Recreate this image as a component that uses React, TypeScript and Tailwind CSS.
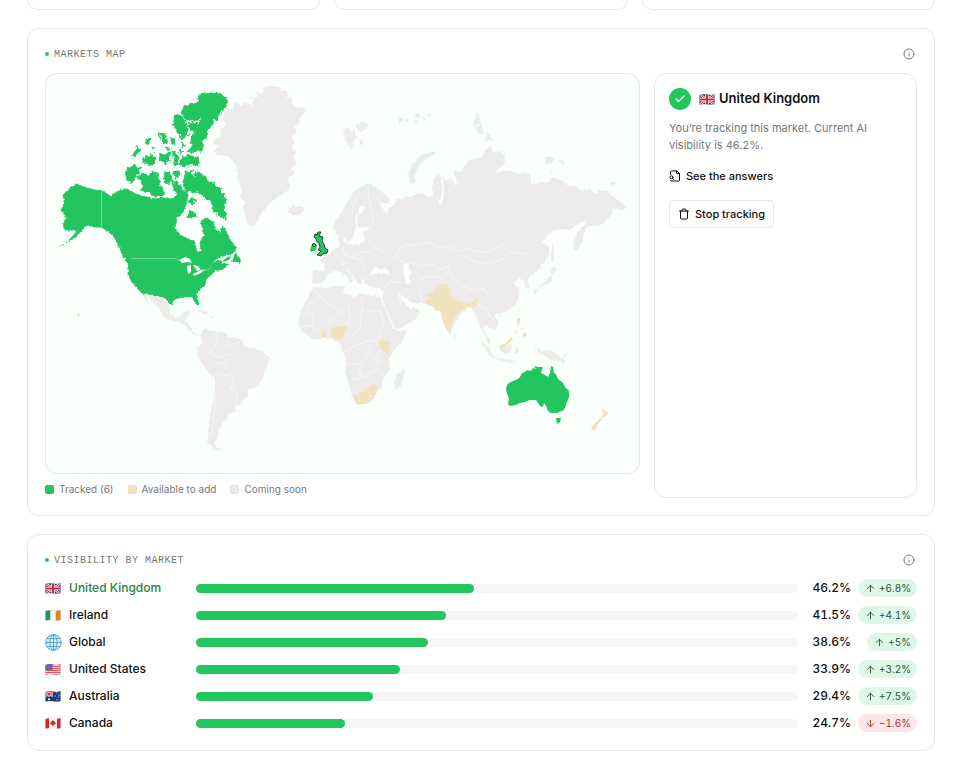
import type { ReactNode } from 'react'
import { ArrowDown, ArrowUp, Check, Info, Trash } from 'lucide-react'

type Code = 'gb' | 'ie' | 'global' | 'us' | 'au' | 'ca'

interface Market {
  code:  Code
  name:  string
  value: number
  delta: string
}

const MARKETS: Market[] = [
  { code: 'gb',     name: 'United Kingdom', value: 46.2, delta: '+6.8%' },
  { code: 'ie',     name: 'Ireland',        value: 41.5, delta: '+4.1%' },
  { code: 'global', name: 'Global',         value: 38.6, delta: '+5%' },
  { code: 'us',     name: 'United States',  value: 33.9, delta: '+3.2%' },
  { code: 'au',     name: 'Australia',      value: 29.4, delta: '+7.5%' },
  { code: 'ca',     name: 'Canada',         value: 24.7, delta: '−1.6%' },
]

const WAVE = 'M.5 2Q4 .8 8 1.6T15.5 1V11Q12 12 8 11.2T.5 11.6Z'

const unionJack = (
  <>
    <path fill="#2b3f86" d="M0 0h16v13H0z" />
    <path stroke="#fff" strokeWidth="2.2" d="M0 1l16 11M16 1L0 12" />
    <path stroke="#d0283c" strokeWidth="1" d="M0 1l16 11M16 1L0 12" />
    <path stroke="#fff" strokeWidth="3.4" d="M8 0v13M0 6.5h16" />
    <path stroke="#d0283c" strokeWidth="2" d="M8 0v13M0 6.5h16" />
  </>
)

const FLAGS: Record<Exclude<Code, 'global'>, ReactNode> = {
  gb: unionJack,
  ie: (
    <>
      <path fill="#fff" d="M0 0h16v13H0z" />
      <path fill="#1f9a5b" d="M0 0h5.3v13H0z" />
      <path fill="#e8821e" d="M10.7 0H16v13h-5.3z" />
    </>
  ),
  us: (
    <>
      <path fill="#f3c3c8" d="M0 0h16v13H0z" />
      <path stroke="#dd5a68" strokeWidth="1" d="M0 1.5h16M0 3.5h16M0 5.5h16M0 7.5h16M0 9.5h16M0 11.5h16" />
      <path fill="#3f66a8" d="M0 0h7.5v7H0z" />
      <path stroke="#a9bbdd" strokeWidth=".6" strokeDasharray=".7 .9" d="M1 3h6M1.6 4.4h5M1 5.8h6" />
    </>
  ),
  au: (
    <>
      <path fill="#1f3b80" d="M0 0h16v13H0z" />
      <path stroke="#fff" strokeWidth="1.6" d="M0 1.5l8 5M8 1.5l-8 5M4 1v6M0 4h8" />
      <path stroke="#d0283c" strokeWidth=".8" d="M0 1.5l8 5M8 1.5l-8 5M4 1v6M0 4h8" />
      <circle cx="4" cy="9.3" r="1" fill="#fff" />
      <path stroke="#fff" strokeWidth="1.1" strokeLinecap="round" d="M12 3h0M10.3 6h0M14 5.2h0M12 9.6h0M13.2 7h0" />
    </>
  ),
  ca: (
    <>
      <path fill="#fff" d="M0 0h16v13H0z" />
      <path fill="#e5202b" d="M0 0h4v13H0zM12 0h4v13h-4zM8 2.8l.8 1.4.9-.4-.2 1.6 1.4-.2-.5 1.1.5.5-1.9 1.5H8.3V10h-.6V8.3H7L5.1 6.8l.5-.5-.5-1.1 1.4.2-.2-1.6.9.4z" />
    </>
  ),
}

function Flag({ code }: { code: Code }) {
  if (code === 'global') {
    return (
      <svg viewBox="0 0 17 17" className="size-[17px] shrink-0" fill="none" aria-hidden="true">
        <circle cx="8.5" cy="8.5" r="7.8" fill="#d9eefa" stroke="#4e9fcb" />
        <ellipse cx="8.5" cy="8.5" rx="3.6" ry="7.8" stroke="#4e9fcb" strokeWidth=".9" />
        <path stroke="#4e9fcb" strokeWidth=".9" d="M8.5.7v15.6M.7 8.5h15.6M2.2 4.6h12.6M2.2 12.4h12.6" />
      </svg>
    )
  }
  return (
    <svg viewBox="0 0 16 13" className="h-[13px] w-4 shrink-0" fill="none" aria-hidden="true">
      <clipPath id="flag-wave"><path d={WAVE} /></clipPath>
      <g clipPath="url(#flag-wave)">{FLAGS[code]}</g>
      <path d={WAVE} stroke="#000" strokeOpacity=".15" strokeWidth=".5" />
    </svg>
  )
}

function AnswersIcon() {
  return (
    <svg
      viewBox="0 0 24 24"
      className="size-3"
      fill="none"
      stroke="currentColor"
      strokeWidth="2"
      strokeLinecap="round"
      strokeLinejoin="round"
      aria-hidden="true"
    >
      <path d="M15 2v4a1 1 0 0 0 1 1h5M3 9V4a2 2 0 0 1 2-2h11l5 5v13a2 2 0 0 1-2 2H4a2 2 0 0 1-1-1" />
      <circle cx="5" cy="14.500" r="3" />
      <path d="M9 19l-1.800-2" />
    </svg>
  )
}

// Land outlines
const EURASIA =
  'M313 270L319 270 325 271 324 264 320 260 324 257 328 256 333 250 340 245 338 239 339 234 342 232 343 236 344 242 352 245 362 243 365 237 363 231 372 228 366 227 359 228 357 222 358 216 362 212 366 208 362 205 359 208 358 213 355 218 356 226 355 231 352 240 347 242 343 234 337 234 334 229 334 222 338 217 342 212 346 204 350 198 353 192 358 188 364 186 368 183 373 186 378 189 384 193 390 199 389 204 383 203 378 201 382 206 384 211 387 213 389 208 393 206 398 197 401 200 405 197 411 197 417 193 423 193 428 197 433 196 432 187 434 179 438 174 441 178 442 188 441 198 438 204 442 204 444 194 443 178 448 181 451 176 455 186 457 182 454 172 462 171 464 166 470 160 482 157 486 150 490 146 494 152 500 151 505 155 505 163 498 170 495 174 502 170 510 171 520 174 525 172 530 175 531 184 536 184 542 181 548 183 552 177 563 181 568 186 577 186 582 191 590 189 597 194 597 190 607 191 615 198 622 203 627 207 622 211 616 209 612 208 613 213 608 218 604 223 597 226 587 227 584 232 583 240 577 251 574 249 573 242 577 233 587 221 584 221 577 225 570 230 560 229 553 231 547 236 542 243 546 244 549 247 549 254 544 263 538 270 532 275 527 279 529 284 528 289 525 287 524 281 520 278 517 280 513 283 518 287 519 294 518 301 513 307 507 311 502 313 497 314 494 315 498 320 498 326 494 330 490 328 485 325 484 329 488 338 485 337 480 327 478 318 474 314 470 305 465 310 461 314 455 323 450 334 445 327 442 318 441 312 435 305 424 303 413 303 407 299 402 296 397 291 400 297 405 303 410 309 414 307 420 311 417 318 407 325 396 329 392 321 385 308 382 297 385 289 378 288 370 287 364 283 364 277 372 275 381 273 390 275 388 270 383 267 380 270 377 267 372 270 368 277 362 279 361 285 357 282 353 276 348 270 345 268 352 276 354 281 350 283 348 277 342 272 335 271 328 274 324 280 318 284 312 283Z'

const AFRICA =
  'M315 287L327 288 340 286 345 286 343 292 349 295 355 297 359 293 367 295 380 297 383 305 390 320 393 328 398 331 407 330 403 340 393 352 389 359 390 370 383 378 382 387 377 392 373 399 368 403 357 405 352 395 348 382 345 372 347 362 342 350 340 342 333 339 323 338 313 340 303 332 298 325 300 312 307 300 311 291Z'

const AMERICAS =
  'M140 292L149 293 155 295 160 296 165 300 169 306 170 313 175 318 180 317 183 312 190 311 188 318 184 322 189 323 191 330 196 334 200 335 205 328 210 331 223 332 230 337 240 339 245 347 255 349 263 352 270 358 268 364 265 368 263 378 258 385 248 390 247 397 240 404 235 407 235 412 228 414 227 420 222 421 222 425 218 430 219 435 214 443 221 451 213 448 208 442 208 430 210 417 212 407 215 390 215 378 208 372 202 363 197 355 198 348 203 342 201 336 193 334 187 327 180 323 173 321 164 317 160 310 154 303 149 297 146 294 147 300 153 309 147 302Z'

const GREENLAND =
  'M264 87L273 86 282 88 278 92 285 90 288 94 286 98 292 96 291 103 297 108 303 107 306 111 299 118 300 122 294 126 297 131 292 136 294 142 292 149 296 153 293 158 297 163 291 168 294 173 288 178 290 188 284 193 276 198 268 205 262 212 257 222 253 228 247 222 243 208 245 202 240 197 242 190 238 178 235 163 228 156 217 155 214 150 219 147 213 144 215 139 221 136 220 130 226 124 222 118 227 108 233 109 235 103 241 106 244 102 251 105 254 100 250 97 258 97 255 92 263 93Z'

const ISLANDS = [
  'M289 208l4-3 3 2 5-1 3 4-5 5-6 0-5-3z',
  'M343 130l6-2 1 5 4-4 3 8-3 5-3 8-4-8zM356 125l6-3 6 1-1 6-6 3-5-3zM359 139l3 2 2 6-4-4z',
  'M412 122l4-2 2 3zM414 115l4-2 3 3-4 2zM422 117l4 1-2 3zM427 114l4 1-3 2zM398 118l4-1 1 3-4 4zM405 119l4 1-3 3z',
  'M435 151l-1 4-8 4-8 8-3 8 0 9-4-1-3-8 4-11 9-9z',
  'M478 112l3 12-8 2 2-8zM475 127l5-2 4 6-1 4-5-2zM488 132l5 8-9 2z',
  'M545 157l5-1 4 3-1 4-8 1zM558 160l6 1 1 3-5-1zM550 169l3 2-2 2zM610 182l5 1-3 3z',
  'M552 243l2 8 0 12-3-3zM549 270l5-3 3 3-5 4zM552 275l0 7-8 4-6 1 5-4zM534 290l4-1-3 6z',
  'M478 338l5 4 6 6 6 10-5-2-7-10zM495 358l10 1 10 2-5 2-12-3zM500 347l8-1 4-3-1 9-6 2-5-3zM516 347l3 2-1 5-3-1zM454 334l2 2-1 3z',
  'M534 350l4-2 5 3 7-1 6 4 7 4 2 6-7-3-6 0-6-5-6-3zM563 355l5-1-3 4z',
  'M404 367l1 7-5 14-5 1-1-6 2-8 5-3z',
  'M197 311l6-1 7 5-6-1zM210 316l6 1-5 1z',
  'M343 272l1 5-2-2zM381 289l4 0-3 2zM519 306l1 4-2-1zM499 315l3 1-2 2z',
]

const NORTH_AMERICA =
  'M63 195L68 190 76 184 84 187 95 190 102 191 111 196 118 191 127 189 136 194 146 197 155 199 163 198 173 199 177 194 176 187 180 184 183 192 188 191 187 202 183 212 177 218 175 228 180 235 190 240 195 242 196 250 198 253 201 250 200 242 204 236 203 230 201 221 206 218 213 222 215 229 220 233 223 226 227 233 231 241 237 248 233 253 223 256 217 258 212 264 222 260 221 264 228 264 222 270 216 270 211 275 206 279 205 285 200 290 196 294 199 304 196 304 192 297 183 297 175 299 171 305 165 298 158 296 155 295 142 293 137 288 132 282 128 275 128 262 123 257 120 248 115 238 108 231 101 227 93 227 87 225 82 230 76 237 66 243 74 235 76 230 65 230 63 223 67 218 61 210 65 203Z'

// Drawn through the coast filter, so the outlines stay coarse here
const ARCTIC = [
  'M200 94L213 92 223 96 228 102 221 113 213 123 206 131 207 138 202 141 203 151 187 152 192 145 190 137 196 134 187 125 192 122 198 124 202 117 194 121 186 121 182 114 181 109 191 103 197 103z',
  'M175 115l6 0 5 8 2 12-6 5-4-7-5-9z',
  'M181 157l7-2 10 3 1 8-18 0z',
  'M185 173l7-3 1 10 3-9 6 2 3 6 8 4 6 4 8 12-2 6 2 14-6-2-8-7-2-9-8-5-7-4-9-1-4-9z',
  'M127 167l8-1 6 2-4 7-6 9-5-5z',
  'M138 176l5-3 6 4 3-6 6 4 1 8 5 8-1 5-9 1-5-4-9-3 3-4z',
  'M165 172l6 1 1 8-5 3-3-5zM173 170l7 0-1 6-4 3zM173 181l5 3 1 9-5-2z',
  'M159 133l6 1 3 9-6 1zM140 157l6 1 4-5 7 8-7 5-8-4zM131 155l7-8 3 3-6 7zM146 138l5 1-2 6-3-1zM160 153l5 2 5-3 0 9-5 2-6-3zM172 149l5 4 3 14-6-3zM171 137l3 2 1 6-4-2z',
  'M188 211l5-1 4 6-5 2-4-1zM190 197l6 2-2 6-4-2zM206 197l3 1-1 4zM152 147l4 1-3 3zM166 147l4 1-3 3zM179 149l5 2-3 3zM181 143l5 2-4 3z',
]

const AUSTRALIA =
  'M507 385L509 383 513 381 518 379 520 377 522 373 525 372 527 370 531 371 533 368 536 369 534 366 538 367 543 367 541 373 545 375 548 377 550 373 551 366 553 367 554 373 556 374 558 379 563 383 565 387 569 391 569 397 567 402 564 410 557 413 551 413 548 411 546 406 544 403 543 407 540 406 536 400 530 400 525 402 520 403 516 405 510 406 508 404 509 398 507 394 506 389Z'

const AVAILABLE = [
  'M424 303l5-5-3-3 8-4 3-6 9-1 4 5-1 5 7 6 8 3 5 1 7-5 3 0-4 8-4 1-4-2-5 4-7 7-3 7-2 10-5-7-3-9-1-7-6-1-1-3z',
  'M332 327l15-1-2 7-5 6-4 0-5-3zM322 331l3 0 1 6-4 1z',
  'M380 340l5 1 5 0-1 6 1 3-3 4-7-6z',
  'M352 395l5 0 8-5 7-6 4 1 1 7-4 7-5 4-11 2z',
  'M499 346l7-3 5-6 2 3-6 5-6 4zM487 337l3 3 0 5-3-4z',
  'M517 318l3 0 0 5-3 3zM520 327l3 2-2 1zM523 333l3 0 1 3-5 1zM516 331l2 0-3 4z',
  'M601 406l2 3 5 3-2 4-4 2 1-5zM600 418l2 1-4 5-3 6-4 0 2-5z',
]

const BORDERS =
  'M368 185l1 15 3 12 1 14M352 216l1-11 7-14M333 250l3 6 6 4 1 6M343 246l1 8 8 4 8 2 5 8M352 258l8-6 12 0 6 6M340 262l10 2M366 238l6 8 10 4 8 8M398 250l8-6 12 2 8-4 8 2 6 4 8-2M398 250l-2 8 8 4M412 262l10 4 10-2 8 6 10-4M420 280l10-4 12 2 6-8M448 246l12 6 8-4 10 4 12 0 12-8 8 8 16 2M448 270l4 8 10 8 12 4 10-2 4 8M454 258l8-4 14 8 14 2 14-6M405 280l6 2M384 288l6-6 12 0M425 284l-6 8 4 8M474 300l6 6 6 2 4 8M486 314l8 6M398 295l4 12M315 290l8 10 18 12 8-6M300 313h8v-10h7M303 326h12M313 314v12l8 5M341 312l-14 12M349 300l1 20-4 5M362 297v14l18 0M362 311l-2 16-8 10M380 311l4 12-4 8 0 10M366 340l12 1M344 352l10-6 8-3 8-2M348 364h12v14l-8 2M360 364l8-8 2-10M370 352l6 8 6 2M371 374l6-4 1-8M360 376l8 0 4-6M380 350l-3 8M218 332l-2 12-6 8M210 352l8 6 12-4M216 364l6-2 10 12 2 8-4 8M218 376l3-2 10 2M216 392l-2 20-2 24M228 336v10l12-4M230 388l8 6-4 12M172 314l8-4'

function WorldMap() {
  return (
    <svg
      viewBox="46 74 593 399"
      role="img"
      aria-label="World map of tracked markets"
      className="block h-full w-full"
      fill="none"
    >
      <filter id="coast" x="-5%" y="-5%" width="110%" height="110%">
        <feTurbulence type="fractalNoise" baseFrequency=".25" numOctaves="2" seed="4" />
        <feDisplacementMap in="SourceGraphic" scale="7" xChannelSelector="R" yChannelSelector="G" />
        <feGaussianBlur stdDeviation=".3" />
      </filter>
      <filter id="shore" x="-5%" y="-5%" width="110%" height="110%">
        <feTurbulence type="fractalNoise" baseFrequency=".3" numOctaves="2" seed="9" />
        <feDisplacementMap in="SourceGraphic" scale="3" xChannelSelector="R" yChannelSelector="G" />
        <feGaussianBlur stdDeviation=".3" />
      </filter>

      <g fill="#ecebea" filter="url(#shore)">
        <path d={EURASIA} />
        <path d={AFRICA} />
        <path d={AMERICAS} />
        <path d={GREENLAND} />
        {ISLANDS.map(d => <path key={d} d={d} />)}
      </g>
      <path fill="#fafffc" d="M403 264l6-1 0 5 3 4-3 5 2 6-5 1-2-9z" />
      <path stroke="#f7faf7" strokeWidth=".8" d={BORDERS} />
      <g fill="#f0e2bf">
        {AVAILABLE.map(d => <path key={d} d={d} />)}
      </g>
      <circle cx="371" cy="396" r="1.3" fill="#ecebea" />

      <g fill="#22c55e">
        <g filter="url(#coast)" stroke="#22c55e" strokeWidth=".6">
          {ARCTIC.map(d => <path key={d} d={d} />)}
        </g>
        <g filter="url(#shore)">
          <path d={NORTH_AMERICA} stroke="#22c55e" strokeWidth=".8" strokeLinejoin="round" />
          <path d="M234 256l2-4 1 4 4 4-1 4-3-2-5 0zM126 257l5 3 0 3zM112 233l5 6 0 4zM222 262l4-4 5-2-2 4z" />
        </g>
        <path d={AUSTRALIA} />
        <path d="M58 247l6-3 0 1zM78 314l1 1-1 1zM556 418l5 0-1 4-3 2z" />
        <path d="M310 250l2-6 2-1 3 2-1 5-5 2z" />
      </g>
      <path
        fill="#fafffc"
        d="M179 260l6-3 5 2 2 4-5-1-5 1zM187 266l4-1 0 7-3 2zM193 265l5 1 3 4-4 1-2-3zM193 274l6-3 6-2-4 4-7 3z"
      />
      <path stroke="#7fdf9f" strokeWidth=".8" d="M101.500 191v36M131 258.500h44l5 2M201 272l11-4" />
      <path
        fill="#22c55e"
        stroke="#14251b"
        strokeWidth=".8"
        strokeLinejoin="round"
        d="M315 234l2 1 1-3 3 0-2 4 4 1-1 4 2 3 1 4 3 2-1 3-4 1-2 2-4-1 4-4-3-1 2-3-1-4-2-1-1-3-2-2zM312 245l2-2 2 2-2 2z"
      />
    </svg>
  )
}

function Card({ title, children }: { title: string; children: ReactNode }) {
  return (
    <section className="rounded-xl border border-[#e8e8e8] bg-white p-[17px]">
      <div className="flex h-4 items-center justify-between">
        <h2 className="flex items-center gap-[5px] font-['Liberation_Mono',monospace] text-[10px] tracking-wider text-[#777] uppercase">
          <span className="size-1 rounded-full bg-[#22c55e]" />
          {title}
        </h2>
        <button type="button" aria-label={`About ${title}`} className="mr-0.5 text-[#777]">
          <Info size={12} />
        </button>
      </div>
      {children}
    </section>
  )
}

function LegendItem({ swatch, label }: { swatch: string; label: string }) {
  return (
    <li className="flex items-center gap-[5px]">
      <span className={`size-[9px] rounded-xs ${swatch}`} />
      {label}
    </li>
  )
}

function MarketRow({ market, active }: { market: Market; active: boolean }) {
  const down = market.delta.startsWith('−')
  const Arrow = down ? ArrowDown : ArrowUp
  return (
    <li className="flex h-5 items-center gap-2">
      <div className="flex w-[143px] items-center">
        <span className="flex w-6"><Flag code={market.code} /></span>
        <span className={`text-[12px] font-medium ${active ? 'text-[#2b8048]' : 'text-[#111]'}`}>
          {market.name}
        </span>
      </div>
      <div className="h-[9px] flex-1 rounded-full bg-[#f6f6f6]">
        <div className="h-full rounded-full bg-[#22c55e]" style={{ width: `${market.value}%` }} />
      </div>
      <span className="w-[45px] text-right text-[12px] font-medium text-[#111] tabular-nums">
        {market.value}%
      </span>
      <span className="flex w-[58px] justify-end">
        <span
          className={`flex h-[18px] items-center gap-[3px] rounded-full pr-1.5 pl-[7px] text-[10px] tabular-nums
                      ${down ? 'bg-[#fae6e4] text-[#a8352d]' : 'bg-[#dff7e7] text-[#27533a]'}`}
        >
          <Arrow size={11} />
          {market.delta}
        </span>
      </span>
    </li>
  )
}

export default function App() {
  return (
    <main className="flex min-h-screen flex-col gap-[18px] bg-white pr-[25px] pl-[27px] font-['Inter',sans-serif] text-[#111]">
      <div className="grid grid-cols-3 gap-3.5">
        <div className="h-2.5 rounded-b-xl border border-t-0 border-[#e8e8e8]" />
        <div className="h-2.5 rounded-b-xl border border-t-0 border-[#e8e8e8]" />
        <div className="h-2.5 rounded-b-xl border border-t-0 border-[#e8e8e8]" />
      </div>

      <Card title="Markets map">
        <div className="mt-[11px] grid grid-cols-[1fr_263px] gap-3.5">
          <div>
            <div className="aspect-[595/401] overflow-hidden rounded-xl border border-[#e3e7e4] bg-[#fafffc]">
              <WorldMap />
            </div>
            <ul className="mt-2 mb-0.5 flex h-3.5 items-center gap-3.5 text-[10px] text-[#777]">
              <LegendItem swatch="bg-[#22c55e]" label="Tracked (6)" />
              <LegendItem swatch="bg-[#f3e0c0]" label="Available to add" />
              <LegendItem swatch="border border-[#dedede] bg-[#ebebeb]" label="Coming soon" />
            </ul>
          </div>

          <aside className="flex flex-col items-start rounded-xl border border-[#e8e8e8] p-3.5">
            <h3 className="flex items-center text-[13px] font-semibold">
              <span className="mr-2 flex size-[22px] items-center justify-center rounded-full bg-[#22c55e] text-white">
                <Check size={12} strokeWidth={2.5} />
              </span>
              <Flag code="gb" />
              <span className="ml-1">United Kingdom</span>
            </h3>
            <p className="mt-2.5 text-[11px] leading-[17px] text-[#777]">
              You’re tracking this market. Current AI visibility is 46.2%.
            </p>
            <a href="#answers" className="mt-3.5 flex h-4 items-center gap-[5px] text-[11px] font-medium">
              <AnswersIcon />
              See the answers
            </a>
            <button
              type="button"
              className="mt-4 flex h-7 items-center gap-[5px] rounded border border-[#e8e8e8] px-2 text-[11px] font-medium"
            >
              <Trash size={12} />
              Stop tracking
            </button>
          </aside>
        </div>
      </Card>

      <Card title="Visibility by market">
        <ul className="mt-2.5 flex flex-col gap-[7px]">
          {MARKETS.map(m => <MarketRow key={m.code} market={m} active={m.code === 'gb'} />)}
        </ul>
      </Card>
    </main>
  )
}
